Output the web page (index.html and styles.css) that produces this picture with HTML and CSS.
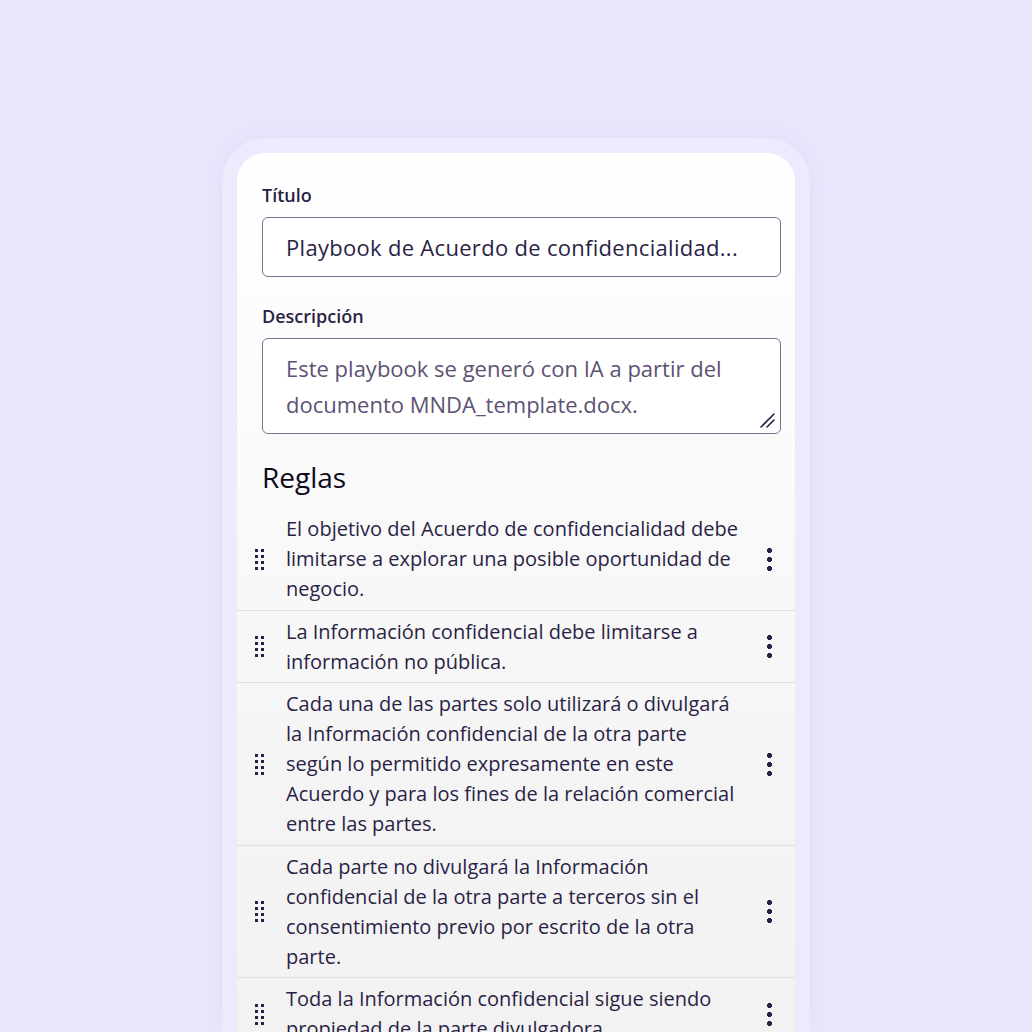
FILE: index.html
```html
<!DOCTYPE html>
<html lang="es">
<head>
<meta charset="utf-8">
<link rel="stylesheet" href="styles.css">
</head>
<body>
<div class="frame">
  <div class="card">
    <div class="form">
      <label class="label">Título</label>
      <div class="input">Playbook de Acuerdo de confidencialidad...</div>
      <label class="label label-2">Descripción</label>
      <div class="textarea">
        Este playbook se generó con IA a partir del documento MNDA_template.docx.
        <svg class="grip" width="20" height="20" viewBox="0 0 20 20"><path d="M4 17 L17 4 M10 17 L17 10" stroke="#2b1f45" stroke-width="1.6" stroke-linecap="round"/></svg>
      </div>
      <h2 class="heading">Reglas</h2>
    </div>
    <ul class="rules">
      <li class="rule"><span class="handle"></span><span class="text">El objetivo del Acuerdo de confidencialidad debe limitarse a explorar una posible oportunidad de negocio.</span><span class="kebab"></span></li>
      <li class="rule"><span class="handle"></span><span class="text">La Información confidencial debe limitarse a información no pública.</span><span class="kebab"></span></li>
      <li class="rule"><span class="handle"></span><span class="text">Cada una de las partes solo utilizará o divulgará la Información confidencial de la otra parte según lo permitido expresamente en este Acuerdo y para los fines de la relación comercial entre las partes.</span><span class="kebab"></span></li>
      <li class="rule"><span class="handle"></span><span class="text">Cada parte no divulgará la Información confidencial de la otra parte a terceros sin el consentimiento previo por escrito de la otra parte.</span><span class="kebab"></span></li>
      <li class="rule"><span class="handle"></span><span class="text">Toda la Información confidencial sigue siendo propiedad de la parte divulgadora.</span><span class="kebab"></span></li>
    </ul>
  </div>
</div>
</body>
</html>
```

FILE: styles.css
```css
* { box-sizing: border-box; }
html, body { margin: 0; padding: 0; }
body {
  width: 1032px;
  height: 1032px;
  overflow: hidden;
  background: #ebe5fc;
  font-family: "Open Sans", "Noto Sans", sans-serif;
  color: #2b1f45;
}
.frame {
  margin: 138px 0 0 222px;
  width: 588px;
  height: 894px;
  padding: 15px 15px 0;
  border-radius: 44px 44px 0 0;
  background: #efe9fd;
  box-shadow: 0 0 24px rgba(120, 100, 170, 0.08);
  overflow: hidden;
}
.card {
  width: 558px;
  height: 960px;
  border-radius: 28px;
  background: linear-gradient(180deg, #ffffff 0%, #f4f4f5 70%, #f1f1f2 100%);
  padding-top: 30px;
}
.form { padding: 0 14px 0 25px; }
.label {
  display: block;
  font-size: 18px;
  line-height: 24px;
  font-weight: 600;
  color: #2b1f45;
}
.label-2 { margin-top: 27px; }
.input {
  margin-top: 10px;
  height: 60px;
  border: 1px solid #7b7290;
  border-radius: 6px;
  background: #fff;
  padding-left: 23px;
  font-size: 22px;
  line-height: 58px;
  letter-spacing: 0.3px;
  color: #2b1f45;
}
.textarea {
  position: relative;
  margin-top: 10px;
  height: 96px;
  border: 1px solid #7b7290;
  border-radius: 6px;
  background: #fff;
  padding: 11px 20px 0 23px;
  font-size: 22px;
  line-height: 36px;
  color: #5d5273;
}
.grip { position: absolute; right: 3px; bottom: 3px; }
.heading {
  margin: 25px 0 13px;
  font-size: 28px;
  line-height: 36px;
  font-weight: 500;
  color: #0f0a1a;
}
.rules { list-style: none; margin: 0; padding: 0; }
.rule {
  display: flex;
  align-items: center;
  padding: 6px 23px 5.5px 18px;
  border-bottom: 1px solid #e1dfe6;
}
.handle {
  flex: none;
  width: 9px;
  height: 21px;
  background-image: radial-gradient(circle at 1.5px 1.5px, #2b1f45 1.5px, transparent 1.6px);
  background-size: 6px 6px;
}
.text {
  flex: 1;
  margin-left: 22px;
  padding-right: 19px;
  font-size: 20px;
  line-height: 30px;
  color: #2b1f45;
}
.kebab {
  flex: none;
  width: 5px;
  height: 23px;
  background-image: radial-gradient(circle at 2.5px 2.5px, #2b1f45 2.4px, transparent 2.6px);
  background-size: 5px 9px;
}
```
